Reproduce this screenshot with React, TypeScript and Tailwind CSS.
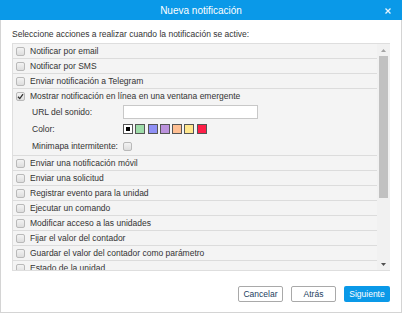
import { useState } from "react";

const actions = [
  "Notificar por email",
  "Notificar por SMS",
  "Enviar notificación a Telegram",
];

const moreActions = [
  "Enviar una notificación móvil",
  "Enviar una solicitud",
  "Registrar evento para la unidad",
  "Ejecutar un comando",
  "Modificar acceso a las unidades",
  "Fijar el valor del contador",
  "Guardar el valor del contador como parámetro",
  "Estado de la unidad",
];

const swatches = ["#ffffff", "#9edca9", "#8f90f5", "#bb92dc", "#ffbf93", "#ffe78e", "#ff1f48"];

function Check({ checked = false }: { checked?: boolean }) {
  return (
    <span className="w-[9px] h-[9px] shrink-0 rounded-[2px] border border-[#b9b9b9] bg-gradient-to-b from-[#f3f3f3] to-[#dedede] flex items-center justify-center">
      {checked && (
        <svg width="7" height="7" viewBox="0 0 7 7">
          <path d="M1 3.8 L2.8 5.6 L6 1.2" stroke="#333" strokeWidth="1.3" fill="none" />
        </svg>
      )}
    </span>
  );
}

function Row({ label }: { label: string }) {
  return (
    <div className="h-[15px] shrink-0 flex items-center gap-[5px] pl-[3px] bg-[#f4f4f4] border-b border-[#dcdcdc]">
      <Check />
      <span className="whitespace-nowrap">{label}</span>
    </div>
  );
}

export default function App() {
  const [color] = useState(0);
  return (
    <div className="w-[402px] h-[315px] bg-white text-[8.5px] text-[#333] font-['Liberation_Sans',Arial,sans-serif]">
      <div className="h-[313px] flex flex-col">
        {/* Header */}
        <div className="h-[20px] shrink-0 bg-[#0a99e8] relative flex items-center justify-center text-white text-[10px]">
          Nueva notificación
          <svg className="absolute right-[11px] top-[8px]" width="6" height="6" viewBox="0 0 6 6">
            <path d="M0.5 0.5 L5.5 5.5 M5.5 0.5 L0.5 5.5" stroke="#e6f4fd" strokeWidth="1.3" />
          </svg>
        </div>

        {/* Body */}
        <div className="flex-1 flex flex-col px-[11px] border-x border-b border-[#d4d4d4]">
          <div className="h-[12px] mt-[8px] flex items-center whitespace-nowrap">
            Seleccione acciones a realizar cuando la notificación se active:
          </div>

          <div className="mt-[3px] h-[228px] flex border border-[#dedede] border-r-0 overflow-hidden">
            <div className="flex-1 flex flex-col overflow-hidden">
              {actions.map((a) => (
                <Row key={a} label={a} />
              ))}
              <div className="shrink-0 bg-[#f4f4f4] border-b border-[#dcdcdc]">
                <div className="h-[15px] flex items-center gap-[5px] pl-[3px]">
                  <Check checked />
                  <span className="whitespace-nowrap">Mostrar notificación en línea en una ventana emergente</span>
                </div>
                <div className="h-[16px] flex items-center pl-[19px]">
                  <span className="w-[91px]">URL del sonido:</span>
                  <div className="w-[135px] h-[14px] bg-white border border-[#c8c8c8]" />
                </div>
                <div className="h-[18px] flex items-center pl-[19px]">
                  <span className="w-[91px]">Color:</span>
                  <div className="flex gap-[2.3px]">
                    {swatches.map((c, i) => (
                      <span
                        key={c}
                        className="w-[10px] h-[10px] border border-[#555] flex items-center justify-center"
                        style={{ backgroundColor: c }}
                      >
                        {i === color && <span className="w-[4px] h-[4px] bg-black" />}
                      </span>
                    ))}
                  </div>
                </div>
                <div className="h-[17px] flex items-center pl-[19px]">
                  <span className="w-[91px] whitespace-nowrap">Minimapa intermitente:</span>
                  <Check />
                </div>
              </div>
              {moreActions.map((a) => (
                <Row key={a} label={a} />
              ))}
            </div>

            {/* Scrollbar */}
            <div className="w-[13px] shrink-0 bg-[#f1f1f1] flex flex-col items-center">
              <div className="h-[12px] w-full flex items-center justify-center">
                <svg width="5" height="3" viewBox="0 0 5 3">
                  <path d="M2.5 0 L5 3 L0 3 Z" fill="#a3a3a3" />
                </svg>
              </div>
              <div className="w-[9px] h-[142px] bg-[#c1c1c1]" />
              <div className="flex-1" />
              <div className="h-[12px] w-full flex items-center justify-center">
                <svg width="5" height="3" viewBox="0 0 5 3">
                  <path d="M0 0 L5 0 L2.5 3 Z" fill="#505050" />
                </svg>
              </div>
            </div>
          </div>

          {/* Footer */}
          <div className="mt-[15px] flex justify-end gap-[8px]">
            <button className="w-[45px] h-[16px] rounded-[2px] border border-[#a9a9a9] bg-white text-[#23405e]">
              Cancelar
            </button>
            <button className="w-[45px] h-[16px] rounded-[2px] border border-[#a9a9a9] bg-white text-[#23405e]">
              Atrás
            </button>
            <button className="w-[46px] h-[16px] rounded-[2px] bg-[#0a99e8] text-white">
              Siguiente
            </button>
          </div>
        </div>
      </div>
    </div>
  );
}
